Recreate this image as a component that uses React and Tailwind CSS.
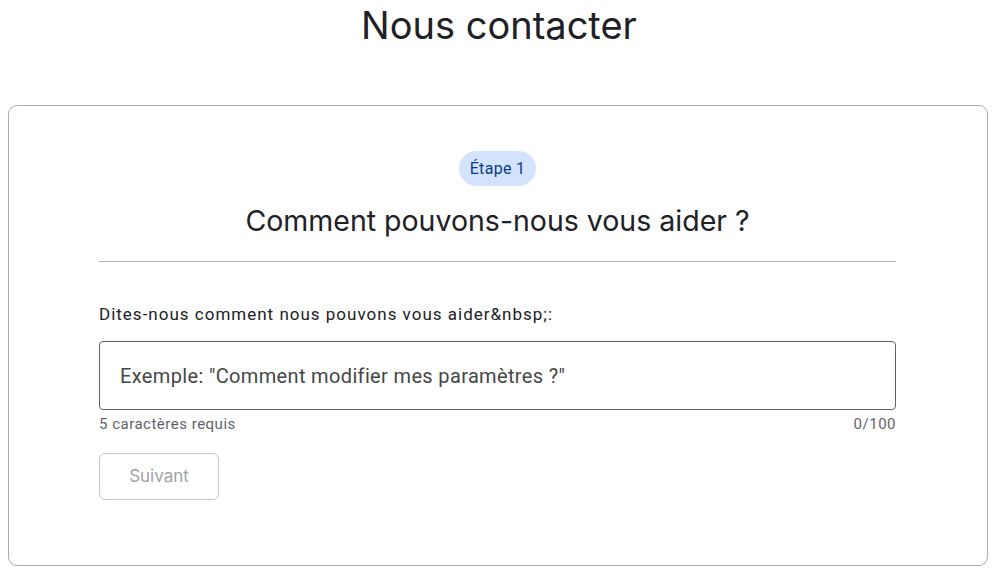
export default function App() {
  const head = { fontFamily: 'Inter, "Open Sans", sans-serif' };
  const body = { fontFamily: 'Roboto, "Liberation Sans", sans-serif' };
  return (
    <div className="min-h-[576px] bg-white" style={body}>
      <h1 className="text-center text-[38px] leading-[50px] text-[#202124]" style={head}>
        Nous contacter
      </h1>
      <div className="ml-2 w-[980px] mt-[55px] h-[461px] rounded-[9px] border border-[#ababab] pl-[90px] pr-[91px] pt-[45px]">
        <div className="flex flex-col items-center">
          <span className="rounded-full bg-[#d3e3fd] px-[11px] h-[35px] leading-[35px] text-[16px] tracking-[0.3px] text-[#0b3b8c]">
            Étape 1
          </span>
          <h2 className="mt-[15px] text-[28.5px] leading-[40px] text-[#202124]" style={head}>
            Comment pouvons-nous vous aider ?
          </h2>
        </div>
        <div className="mt-[20px] h-px bg-[#b0b0b0]" />
        <div className="mt-[40px] text-[17px] leading-[24px] tracking-[1px] text-[#202124]">
          Dites-nous comment nous pouvons vous aider&amp;nbsp;:
        </div>
        <div className="mt-[15px] h-[69px] rounded-[4px] border border-[#5f6368] px-[20px] flex items-center text-[20px] tracking-[0.35px] text-[#444746]">
          Exemple: "Comment modifier mes paramètres ?"
        </div>
        <div className="mt-[4px] flex justify-between text-[15px] leading-[20px] tracking-[0.5px] text-[#5f6368]">
          <span>5 caractères requis</span>
          <span>0/100</span>
        </div>
        <button
          className="mt-[19px] h-[47px] w-[120px] rounded-[6px] border border-[#c4c7c5] text-[17px] text-[#a0a3a6] bg-white"
          style={head}
        >
          Suivant
        </button>
      </div>
    </div>
  );
}
